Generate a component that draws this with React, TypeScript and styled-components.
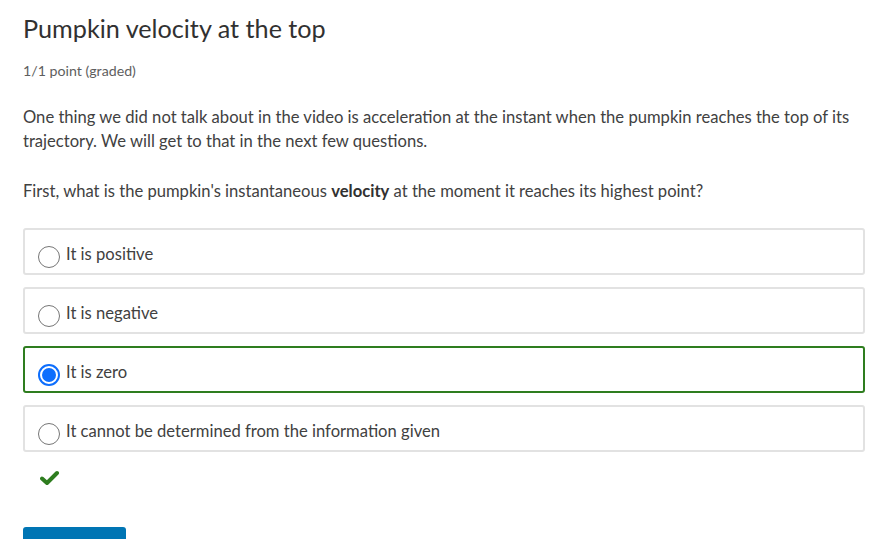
import React from "react";
import styled, { createGlobalStyle } from "styled-components";

const Global = createGlobalStyle`
  html, body { margin: 0; padding: 0; background: #fff; }
  body { font-family: Lato, "Noto Sans", sans-serif; color: #414141; }
`;

const Page = styled.div`
  padding: 12px 23px 0 23px;
  width: 842px;
  box-sizing: content-box;
`;

const Title = styled.h3`
  margin: 0;
  font-size: 25.2px;
  font-weight: 400;
  line-height: 32px;
  color: #313131;
`;

const Meta = styled.div`
  margin-top: 18px;
  font-size: 14.2px;
  line-height: 18px;
  color: #5e5e5e;
`;

const Para = styled.p`
  margin: 25px 0 0 0;
  font-size: 16.6px;
  line-height: 24px;
  color: #414141;
  & + & { margin-top: 26px; }
  strong { font-weight: 700; color: #313131; }
`;

const Options = styled.div`
  margin-top: 25px;
  display: flex;
  flex-direction: column;
  gap: 12px;
`;

const Option = styled.label<{ $selected?: boolean }>`
  display: flex;
  align-items: center;
  gap: 6px;
  height: 47px;
  box-sizing: border-box;
  padding: 8px 0 0 13px;
  border: 2px solid ${(p) => (p.$selected ? "#2e7d1f" : "#e2e2e2")};
  border-radius: 3px;
  font-size: 16.6px;
  color: #414141;
`;

const Radio = styled.span<{ $checked?: boolean }>`
  width: 22px;
  height: 22px;
  flex: none;
  box-sizing: border-box;
  border-radius: 50%;
  border: ${(p) => (p.$checked ? "2px solid #0d6efd" : "1.5px solid #767676")};
  background: #fff;
  display: flex;
  align-items: center;
  justify-content: center;
  margin-top: 3px;
  &::after {
    content: "";
    display: ${(p) => (p.$checked ? "block" : "none")};
    width: 14px;
    height: 14px;
    border-radius: 50%;
    background: #0d6efd;
  }
`;

const Label = styled.span`
  line-height: 20px;
  margin-top: -4px;
`;

const Status = styled.div`
  margin-top: 18px;
  padding-left: 17px;
  height: 16px;
  display: flex;
  align-items: center;
`;

const SubmitButton = styled.button`
  margin-top: 41px;
  width: 103px;
  height: 40px;
  border: none;
  border-radius: 3px;
  background: #0075b4;
  display: block;
`;

const options = [
  "It is positive",
  "It is negative",
  "It is zero",
  "It cannot be determined from the information given",
];

export default function App() {
  return (
    <>
      <Global />
      <Page>
        <Title>Pumpkin velocity at the top</Title>
        <Meta>1/1 point (graded)</Meta>
        <Para>
          One thing we did not talk about in the video is acceleration at the instant when the pumpkin reaches the top of its
          trajectory. We will get to that in the next few questions.
        </Para>
        <Para>
          First, what is the pumpkin's instantaneous <strong>velocity</strong> at the moment it reaches its highest point?
        </Para>
        <Options>
          {options.map((o, i) => (
            <Option key={o} $selected={i === 2}>
              <Radio $checked={i === 2} />
              <Label>{o}</Label>
            </Option>
          ))}
        </Options>
        <Status>
          <svg width="20" height="16" viewBox="0 0 20 16">
            <path d="M2 8.5 L7 13 L17 3" fill="none" stroke="#2e7d1f" strokeWidth="4" strokeLinecap="round" strokeLinejoin="round" />
          </svg>
        </Status>
        <SubmitButton aria-label="Submit" />
      </Page>
    </>
  );
}
